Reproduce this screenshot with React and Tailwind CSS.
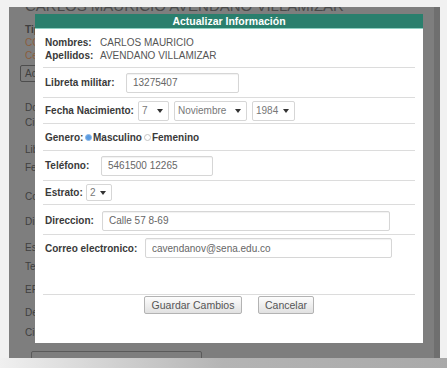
export default function App() {
  return (
    <div className="w-[447px] h-[368px] bg-[#f1f1f1] flex flex-col overflow-hidden font-['Liberation_Sans',Arial,sans-serif]">
      <div className="flex pt-[7px] pl-[9px] pr-[7px] h-[358px] shrink-0">
        <div className="relative flex-1 flex bg-[#7e7e7e] overflow-hidden">
          <BackgroundPage />
          <div className="w-[6px] bg-[#6f6f6f]" />
          <Modal />
        </div>
      </div>
      <div className="h-[10px] shrink-0 bg-gradient-to-r from-[#f0f0f0] via-[#b4b4b4] to-[#a9a9a9]" />
    </div>
  );
}

// page behind the overlay, only its left edge shows
function BackgroundPage() {
  return (
    <div className="flex-1 pl-[11px] text-[10px] text-[#3f3f3f]">
      <div className="h-[16px] overflow-hidden">
        <div className="-mt-[10px] pl-[5px] text-[15px] leading-[18px] text-[#4a4a4a] whitespace-nowrap">
          CARLOS MAURICIO AVENDANO VILLAMIZAR
        </div>
      </div>
      <div className="h-[13px] leading-[13px] pl-[5px] font-bold">Tipo</div>
      <div className="h-[13px] leading-[13px] pl-[5px] text-[#8a5d3c]">CC</div>
      <div className="h-[13px] leading-[13px] pl-[5px] text-[#8a5d3c]">Centro</div>
      <div className="mt-[3px] h-[17px] w-[120px] border border-[#4d4d4d] rounded-[2px] px-[4px] leading-[15px]">
        Actualizar
      </div>
      <div className="mt-[19px] h-[14px] leading-[14px] pl-[5px]">Documento</div>
      <div className="mt-[1px] h-[14px] leading-[14px] pl-[5px]">Ciudad</div>
      <div className="mt-[13px] h-[14px] leading-[14px] pl-[5px]">Libreta</div>
      <div className="mt-[4px] h-[14px] leading-[14px] pl-[5px]">Fecha</div>
      <div className="mt-[15px] h-[14px] leading-[14px] pl-[5px]">Correo</div>
      <div className="mt-[11px] h-[14px] leading-[14px] pl-[5px]">Direccion</div>
      <div className="mt-[12px] h-[14px] leading-[14px] pl-[5px]">Estrato</div>
      <div className="mt-[5px] h-[14px] leading-[14px] pl-[5px]">Telefono</div>
      <div className="mt-[9px] h-[14px] leading-[14px] pl-[5px]">EPS</div>
      <div className="mt-[9px] h-[14px] leading-[14px] pl-[5px]">Departamento</div>
      <div className="mt-[6px] h-[14px] leading-[14px] pl-[5px]">Ciudad</div>
      <div className="mt-[11px] h-[20px] w-[171px] ml-[11px] border border-[#5a5a5a] rounded-[2px] px-[6px] pt-[4px] leading-[14px] text-[#3a3a3a]">
        Modificar Información de LCSENA
      </div>
    </div>
  );
}

function Arrow() {
  return (
    <svg width="6" height="4" viewBox="0 0 6 4" className="shrink-0">
      <path d="M0 0h6L3 4z" fill="#333" />
    </svg>
  );
}

function Select({ value, width }) {
  return (
    <div
      className="h-full flex items-center justify-between pl-[3px] pr-[5px] border border-[#d6d6d6] rounded-[2px] text-[#777] font-normal bg-white"
      style={{ width }}
    >
      <span>{value}</span>
      <Arrow />
    </div>
  );
}

function Input({ value, width }) {
  return (
    <div
      className="h-[20px] flex items-center px-[6px] border border-[#d6d6d6] rounded-[2px] text-[#666] font-normal shadow-[inset_0_1px_1px_rgba(0,0,0,0.06)] bg-white"
      style={{ width }}
    >
      {value}
    </div>
  );
}

function Modal() {
  return (
    <div className="absolute left-[26px] top-[7px] w-[388px] h-[329px] bg-white flex flex-col text-[10px] text-[#3a3a3a]">
      <div className="h-[15px] bg-[#2a7f6d] border-b border-[#8ed0c2] text-white font-bold text-[10.5px] leading-[14px] text-center">
        Actualizar Información
      </div>
      <div className="flex-1 flex flex-col px-[8px]">
        <div className="h-[39px] pt-[7px] pl-[2px] border-b border-[#dcdcdc] leading-[13px]">
          <div className="flex">
            <span className="w-[55px] font-bold">Nombres:</span>
            <span className="text-[#555]">CARLOS MAURICIO</span>
          </div>
          <div className="flex">
            <span className="w-[55px] font-bold">Apellidos:</span>
            <span className="text-[#555]">AVENDANO VILLAMIZAR</span>
          </div>
        </div>

        <div className="h-[30px] flex items-center pl-[2px] border-b border-[#dcdcdc]">
          <span className="w-[81px] shrink-0 font-bold whitespace-nowrap">Libreta militar:</span>
          <Input value="13275407" width={113} />
        </div>

        <div className="h-[26px] flex items-center pl-[2px] border-b border-[#dcdcdc]">
          <span className="w-[93px] shrink-0 font-bold whitespace-nowrap">Fecha Nacimiento:</span>
          <div className="h-[20px] flex gap-[5px]">
            <Select value="7" width={31} />
            <Select value="Noviembre" width={73} />
            <Select value="1984" width={43} />
          </div>
        </div>

        <div className="h-[27px] flex items-center pl-[2px] border-b border-[#dcdcdc] font-bold">
          <span className="w-[40px] shrink-0">Genero:</span>
          <span className="w-[7px] h-[7px] rounded-full bg-[#5b9be0] border border-[#8cb8e8]" />
          <span className="ml-[1px]">Masculino</span>
          <span className="ml-[2px] w-[7px] h-[7px] rounded-full bg-white border border-[#c4c4c4]" />
          <span className="ml-[1px]">Femenino</span>
        </div>

        <div className="h-[30px] flex items-center pl-[2px] border-b border-[#dcdcdc]">
          <span className="w-[56px] shrink-0 font-bold">Teléfono:</span>
          <Input value="5461500 12265" width={112} />
        </div>

        <div className="h-[24px] flex items-center pl-[2px] border-b border-[#dcdcdc]">
          <span className="w-[41px] shrink-0 font-bold">Estrato:</span>
          <div className="h-[17px] flex">
            <Select value="2" width={26} />
          </div>
        </div>

        <div className="h-[30px] flex items-center pt-[2px] pl-[2px] border-b border-[#dcdcdc]">
          <span className="w-[57px] shrink-0 font-bold">Direccion:</span>
          <Input value="Calle 57 8-69" width={288} />
        </div>

        <div className="h-[60px] flex items-start pt-[3px] pl-[2px] border-b border-[#dcdcdc]">
          <span className="w-[100px] shrink-0 font-bold whitespace-nowrap h-[20px] flex items-center">Correo electronico:</span>
          <Input value="cavendanov@sena.edu.co" width={247} />
        </div>

        <div className="pt-[1px] flex justify-center gap-[16px]">
          <button className="h-[18px] w-[98px] border border-[#b3b3b3] rounded-[2px] bg-gradient-to-b from-[#fdfdfd] to-[#e1e1e1] text-[10.5px] text-[#555] leading-none">
            Guardar Cambios
          </button>
          <button className="h-[18px] w-[56px] border border-[#b3b3b3] rounded-[2px] bg-gradient-to-b from-[#fdfdfd] to-[#e1e1e1] text-[10.5px] text-[#555] leading-none">
            Cancelar
          </button>
        </div>
      </div>
    </div>
  );
}
